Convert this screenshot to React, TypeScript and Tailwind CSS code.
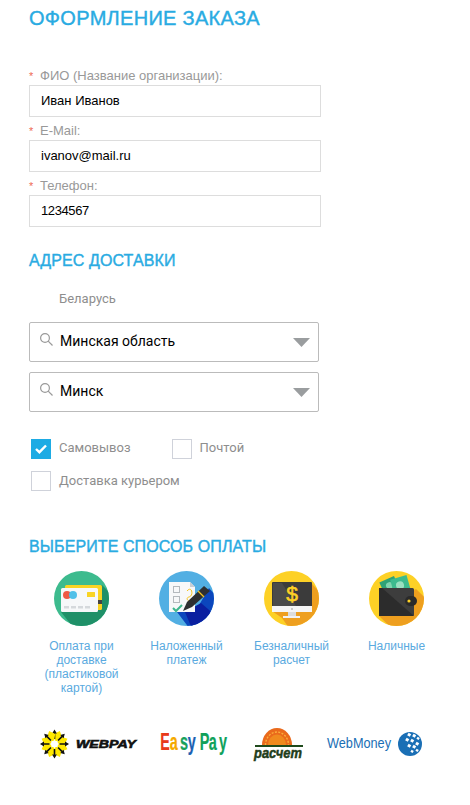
import React from "react";

const Field = ({ label, value, valueClass }: { label: string; value: string; valueClass?: string }) => (
  <div className="mt-[5px] first:mt-0">
    <div className="flex h-[18px] items-center text-[13px] leading-[18px] text-[#999999]">
      <span className="w-[11px] text-[11px] text-[#ee6a55]">*</span>
      <span>{label}</span>
    </div>
    <div className={`flex h-[32px] w-[292px] items-center border border-[#dddddd] px-[11px] text-[13px] text-black ${valueClass ?? ""}`}>{value}</div>
  </div>
);

const Select = ({ value }: { value: string }) => (
  <div className="relative flex h-[40px] w-[290px] items-center rounded-[2px] border border-[#bbbbbb] pb-[1px] pl-[30px] font-['Roboto',sans-serif] text-[14px] text-black">
    <svg className="absolute left-[9px] top-[9px]" width="15" height="15" viewBox="0 0 15 15" fill="none" stroke="#9a9a9a" strokeWidth="1.2">
      <circle cx="6" cy="6" r="4.4" />
      <path d="M9.2 9.2 13.5 13.5" />
    </svg>
    <span>{value}</span>
    <svg className="absolute right-[8px] top-[15px]" width="17" height="9" viewBox="0 0 17 9">
      <path d="M0 0H17L8.5 9Z" fill="#9a9d9f" />
    </svg>
  </div>
);

const Check = ({ checked, label, className, labelClass }: { checked?: boolean; label: string; className?: string; labelClass?: string }) => (
  <div className={`flex items-center font-['Roboto',sans-serif] text-[13px] leading-[15px] text-[#8e8e8e] ${className ?? ""}`}>
    {checked ? (
      <div className="flex h-[20px] w-[20px] items-center justify-center bg-[#1dabe4]">
        <svg width="12" height="10" viewBox="0 0 12 10" fill="none" stroke="#fff" strokeWidth="2.4">
          <path d="M1 5 4.4 8.2 11 1.5" />
        </svg>
      </div>
    ) : (
      <div className="h-[20px] w-[20px] border border-[#cfd2da]" />
    )}
    <span className={`ml-[8px] ${labelClass ?? "pb-[3px]"}`}>{label}</span>
  </div>
);

const Frame = ({ id, bg, children }: { id: string; bg: string; children: React.ReactNode }) => (
  <svg width="55" height="55" viewBox="0 0 55 55">
    <defs>
      <clipPath id={id}>
        <circle cx="27.5" cy="27.5" r="27.5" />
      </clipPath>
    </defs>
    <g clipPath={`url(#${id})`}>
      <rect width="55" height="55" fill={bg} />
      {children}
    </g>
  </svg>
);

const CardIcon = () => (
  <Frame id="c1" bg="#3dbb8e">
    <path d="M48 14 70 36V70H30L7 41Z" fill="#1f9068" />
    <rect x="11" y="14" width="37" height="25" rx="1.5" fill="#f9d423" />
    <rect x="44" y="29" width="4" height="4" fill="#444" />
    <rect x="7" y="17" width="37" height="24" rx="1.5" fill="#f6f8f9" />
    <circle cx="13" cy="24" r="4" fill="#ef5a45" />
    <circle cx="19" cy="24" r="4" fill="#4fc0e8" />
    <rect x="33" y="21" width="8" height="5" rx="0.5" fill="#f9d423" />
    <g fill="#d5d9dc">
      <rect x="10" y="35" width="5" height="2.5" />
      <rect x="17" y="35" width="5" height="2.5" />
      <rect x="24" y="35" width="5" height="2.5" />
      <rect x="31" y="35" width="5" height="2.5" />
    </g>
  </Frame>
);

const NoteIcon = () => (
  <Frame id="c2" bg="#52afe3">
    <path d="M36 41 50 17 70 40V70H40L18 41Z" fill="#0b46bd" />
    <path d="M42 32 56 44V60H34L26 41Z" fill="#0a1fa0" />
    <path d="M10 11H31L36 16V41H10Z" fill="#f7f8f9" />
    <path d="M31 11V16H36Z" fill="#c9ced3" />
    <g fill="none" stroke="#b4b9bd" strokeWidth="1">
      <rect x="14.5" y="15.5" width="6" height="6" />
      <rect x="14.5" y="25.5" width="6" height="6" />
    </g>
    <path d="M14 37 17 40 23 34" fill="none" stroke="#3db78d" strokeWidth="2" />
    <path d="M28 20C33 14 35 25 30 26S31 34 36 28" fill="none" stroke="#f3c321" strokeWidth="1" />
    <path d="M45 15 51 20 33 36 24 40 28 31Z" fill="#2d2f31" />
    <path d="M39 20 45 26" stroke="#f3c321" strokeWidth="1.2" />
  </Frame>
);

const ScreenIcon = () => (
  <Frame id="c3" bg="#fdd126">
    <path d="M48 13 70 36V70H34L18 47 8 40Z" fill="#ee9f1f" />
    <rect x="8" y="11" width="40" height="30" rx="1" fill="#3b3b3b" />
    <path d="M9 12H18L32 35H9Z" fill="#4a4a4a" />
    <rect x="8" y="35" width="40" height="6" fill="#f5f5f5" />
    <circle cx="28" cy="38" r="1" fill="#bbb" />
    <rect x="24" y="41" width="8" height="4" fill="#dcdcdc" />
    <rect x="19" y="45" width="17" height="2" fill="#f2f2f2" />
    <text x="28" y="30" textAnchor="middle" fontSize="21" fontFamily="'Liberation Sans',sans-serif" fill="#fdd126" stroke="#fdd126" strokeWidth="0.6">$</text>
  </Frame>
);

const WalletIcon = () => (
  <Frame id="c4" bg="#fdd126">
    <path d="M47 18 70 40V70H36L10 45Z" fill="#ee9f1f" />
    <g transform="rotate(-24 20 16)">
      <rect x="13" y="8" width="16" height="14" fill="#2ea276" />
      <circle cx="21" cy="15" r="3.5" fill="#7fd4ae" />
    </g>
    <g transform="rotate(-16 32 14)">
      <rect x="23" y="6" width="17" height="16" fill="#3dbb8e" />
      <circle cx="31" cy="14" r="4" fill="#9ae0c0" />
    </g>
    <rect x="10" y="17" width="35" height="28" rx="1.5" fill="#3d3d3d" />
    <path d="M10 17V45H45L13 17Z" fill="#2c2c2c" />
    <rect x="36" y="25" width="12" height="10" rx="5" fill="#2a2a2a" />
    <circle cx="40" cy="30" r="1.6" fill="#fdd126" />
  </Frame>
);

const Pay = ({ icon, label }: { icon: React.ReactNode; label: React.ReactNode }) => (
  <div className="flex flex-col items-center">
    {icon}
    <div className="mt-[13px] w-[90px] text-center text-[12px] leading-[14px] text-[#5aaae0]">{label}</div>
  </div>
);

const WebPay = () => (
  <svg width="104" height="40" viewBox="0 0 104 40" className="ml-[7px] overflow-visible">
    <g transform="translate(18.5 20)">
      {[0, 45, 90, 135, 180, 225, 270, 315].map((a) => (
        <g key={a} transform={`rotate(${a})`}>
          <path d="M-1 -3.5 -4.5 -9 0 -14 4.5 -9 1 -3.5Z" fill="#ffe800" transform="rotate(22.5)" />
          <path d="M-0.8 -5V-10.5H-2.4L0 -14.5 2.4 -10.5H0.8V-5Z" fill="#111" />
        </g>
      ))}
      <circle r="3.2" fill="#fff" />
    </g>
    <text x="40" y="24" fontSize="11" fontWeight="700" fontStyle="italic" fontFamily="'Liberation Sans',sans-serif" fill="#111" stroke="#111" strokeWidth="0.6" textLength="60" lengthAdjust="spacingAndGlyphs">WEBPAY</text>
  </svg>
);

const EasyPay = () => (
  <svg width="76" height="40" viewBox="0 0 76 40" className="ml-[16px] overflow-visible">
    <defs>
      <linearGradient id="ep" gradientUnits="userSpaceOnUse" x1="0" y1="0" x2="120" y2="0">
        <stop offset="0.18" stopColor="#e8391a" />
        <stop offset="0.18" stopColor="#f5a800" />
        <stop offset="0.32" stopColor="#f5a800" />
        <stop offset="0.32" stopColor="#19a05a" />
        <stop offset="0.43" stopColor="#19a05a" />
        <stop offset="0.43" stopColor="#1c5fb0" />
        <stop offset="0.597" stopColor="#1c5fb0" />
        <stop offset="0.597" stopColor="#12a05a" />
      </linearGradient>
    </defs>
    <text transform="scale(0.6 1)" x="7 23 40 53 73 88 105" y="26" fontSize="24" fontWeight="700" fontFamily="'Liberation Sans',sans-serif" fill="url(#ep)" stroke="url(#ep)" strokeWidth="0.2">EasyPay</text>
  </svg>
);

const Raschet = () => (
  <svg width="54" height="40" viewBox="0 0 54 40" className="ml-[20px] overflow-visible">
    <path d="M10 21A15 17 0 0 1 40 21Z" fill="#ea6a1c" />
    <path d="M13.5 21A11.5 13 0 0 1 36.5 21" fill="none" stroke="#fbb03b" strokeWidth="1.4" strokeDasharray="2 1.4" />
    <path d="M16 21A9 10.5 0 0 1 34 21Z" fill="#f08a1e" />
    <rect x="3" y="21" width="48" height="2" fill="#1f4a1c" />
    <text x="2" y="34" fontSize="15" fontWeight="700" fontStyle="italic" fontFamily="'Liberation Sans',sans-serif" fill="#1f3d1a" stroke="#1f3d1a" strokeWidth="0.5" textLength="48" lengthAdjust="spacingAndGlyphs">расчет</text>
  </svg>
);

const WebMoney = () => (
  <svg width="100" height="40" viewBox="0 0 100 40" className="ml-[19px] overflow-visible">
    <text x="2" y="24" fontSize="15" fontFamily="'Liberation Sans',sans-serif" fill="#1a6fb5" textLength="64" lengthAdjust="spacingAndGlyphs">WebMoney</text>
    <circle cx="85" cy="20" r="12" fill="#1a6fb5" />
    <g fill="#fff">
      <rect x="83" y="9" width="3" height="3" transform="rotate(30 84 10)" />
      <rect x="88" y="10" width="3" height="3" transform="rotate(30 89 11)" />
      <rect x="92" y="13" width="2.5" height="2.5" transform="rotate(30 93 14)" />
      <rect x="81" y="14" width="3" height="3" transform="rotate(30 82 15)" />
      <rect x="86" y="15" width="3" height="3" transform="rotate(30 87 16)" />
      <rect x="91" y="18" width="3" height="3" transform="rotate(30 92 19)" />
      <rect x="83" y="20" width="3" height="3" transform="rotate(30 84 21)" />
      <rect x="88" y="21" width="3" height="3" transform="rotate(30 89 22)" />
      <rect x="86" y="26" width="2.5" height="2.5" transform="rotate(30 87 27)" />
      <rect x="91" y="25" width="2.5" height="2.5" transform="rotate(30 92 26)" />
    </g>
  </svg>
);

export default function App() {
  return (
    <div className="h-[805px] w-[470px] overflow-hidden bg-white pl-[29px] font-['Liberation_Sans',Arial,sans-serif]">
      <h1 className="h-[36px] text-[20px] font-normal leading-[36px] tracking-[0.3px] text-[#29abe2] [-webkit-text-stroke:0.4px_#29abe2]">ОФОРМЛЕНИЕ ЗАКАЗА</h1>
      <div className="mt-[31px]">
        <Field label="ФИО (Название организации):" value="Иван Иванов" />
        <Field label="E-Mail:" value="ivanov@mail.ru" />
        <Field label="Телефон:" value="1234567" valueClass="tracking-[-0.4px]" />
      </div>

      <h2 className="mt-[24px] h-[20px] text-[16px] font-normal leading-[20px] tracking-[0.1px] text-[#29abe2] [-webkit-text-stroke:0.4px_#29abe2]">АДРЕС ДОСТАВКИ</h2>
      <div className="mt-[19px] ml-[30px] h-[18px] font-['Roboto',sans-serif] text-[13px] leading-[18px] text-[#8e8e8e]">Беларусь</div>
      <div className="mt-[14px] flex flex-col gap-[10px]">
        <Select value="Минская область" />
        <Select value="Минск" />
      </div>

      <div className="mt-[26px] ml-[2px] flex items-center">
        <Check checked label="Самовывоз" className="mt-[1px]" />
        <Check label="Почтой" className="ml-[41px]" />
      </div>
      <Check label="Доставка курьером" labelClass="pb-[2px]" className="mt-[12px] ml-[2px]" />

      <h2 className="mt-[46px] h-[20px] text-[16px] font-normal leading-[20px] tracking-[0.1px] text-[#29abe2] [-webkit-text-stroke:0.4px_#29abe2]">ВЫБЕРИТЕ СПОСОБ ОПЛАТЫ</h2>
      <div className="mt-[14px] grid h-[124px] w-[420px] grid-cols-4">
        <Pay icon={<CardIcon />} label="Оплата при доставке (пластиковой картой)" />
        <Pay icon={<NoteIcon />} label="Наложенный платеж" />
        <Pay icon={<ScreenIcon />} label="Безналичный расчет" />
        <Pay icon={<WalletIcon />} label="Наличные" />
      </div>
      <div className="mt-[29px] flex items-center">
        <WebPay />
        <EasyPay />
        <Raschet />
        <WebMoney />
      </div>
    </div>
  );
}
